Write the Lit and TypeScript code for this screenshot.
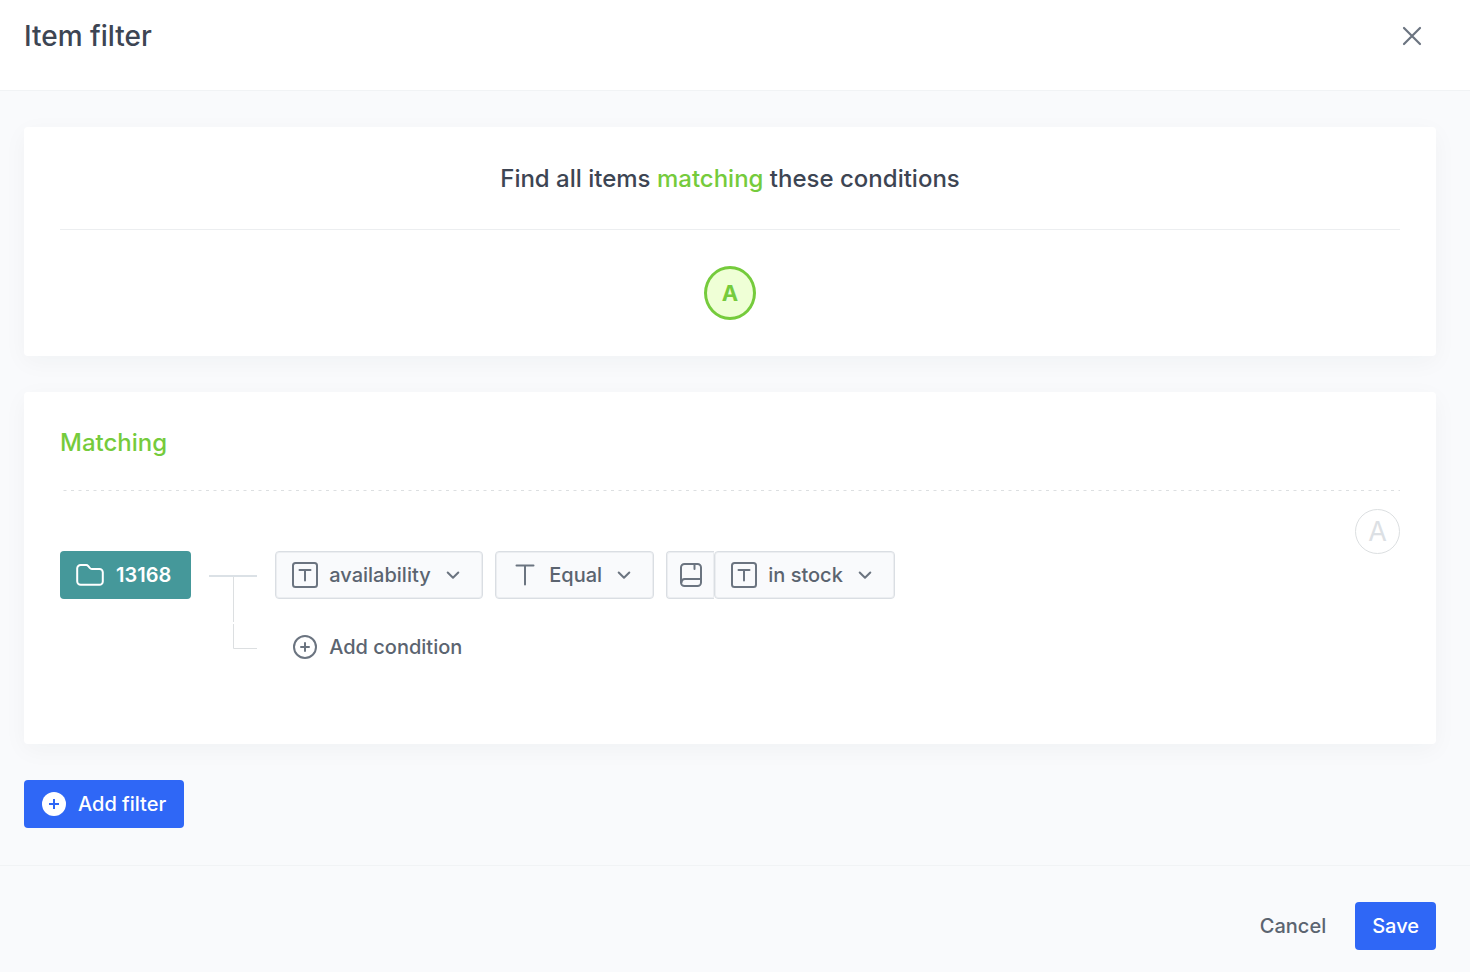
import { LitElement, html, css, svg } from "lit";
import { customElement, property } from "lit/decorators.js";

const typeIcon = svg`
  <rect x="2" y="2" width="24" height="24" rx="2.5" stroke-width="2"/>
  <path d="M8.5 9h11M14 9v10.5" stroke-width="2"/>`;

const equalIcon = svg`<path d="M5.5 4.5h17M14 4.5v19" stroke-width="2"/>`;

@customElement("filter-select")
export class FilterSelect extends LitElement {
  @property() label = "";
  @property() value = "";
  @property() icon = "type";

  static styles = css`
    :host { display: block; }
    .field {
      display: grid;
      grid-template-columns: 54px 1fr 54px;
      align-items: center;
      color: #6b7480;
    }
    select {
      grid-area: 1 / 1 / 2 / 4;
      box-sizing: border-box;
      height: 48px;
      padding: 0 51px 0 53px;
      border: 1px solid #dadee3;
      border-radius: 4px;
      box-shadow: inset 0 0 0 1px #eceef1;
      background: #f9fafc;
      color: #5b6470;
      font: 500 20px/24px Inter, sans-serif;
      appearance: none;
      cursor: pointer;
    }
    svg {
      fill: none;
      stroke: currentColor;
      stroke-linecap: round;
      stroke-linejoin: round;
      pointer-events: none;
      z-index: 1;
    }
    .kind { grid-area: 1 / 1; margin-left: 16px; }
    .chevron { grid-area: 1 / 3; margin-left: 16px; }
  `;

  render() {
    return html`
      <div class="field">
        <select aria-label=${this.label}><option>${this.value}</option></select>
        <svg class="kind" width="28" height="28" viewBox="0 0 28 28" aria-hidden="true">
          ${this.icon === "type" ? typeIcon : equalIcon}
        </svg>
        <svg class="chevron" width="16" height="16" viewBox="0 0 16 16" aria-hidden="true">
          <path d="M2.7 5.5 8 10.8l5.3-5.3" stroke-width="2"/>
        </svg>
      </div>
    `;
  }
}

@customElement("app-root")
export class AppRoot extends LitElement {
  static styles = css`
    :host {
      display: flex;
      flex-direction: column;
      min-height: 100vh;
      box-sizing: border-box;
      background: #f9fafc;
      color: #3d4553;
      font: 500 20px/24px Inter, sans-serif;
    }
    h1, h2 { margin: 0; font-weight: 500; }
    button {
      font: inherit;
      border: 0;
      border-radius: 4px;
      background: none;
      color: #5b6470;
      height: 48px;
      padding: 0 17px;
      cursor: pointer;
    }
    svg { display: block; flex: none; }
    .header {
      display: flex;
      justify-content: space-between;
      padding: 18px 34px 36px 24px;
      background: #fff;
      border-bottom: 1px solid #f1f3f5;
    }
    h1 { font-size: 28px; line-height: 36px; }
    .close {
      display: grid;
      place-items: center;
      width: 48px;
      height: 36px;
      padding: 0;
      color: #6b7480;
    }
    .content {
      display: flex;
      flex-direction: column;
      align-items: flex-start;
      gap: 36px;
      padding: 36px 34px 37px 24px;
    }
    .card {
      align-self: stretch;
      padding: 36px;
      border-radius: 4px;
      background: #fff;
      box-shadow: 0 6px 24px rgba(30, 40, 60, 0.04);
    }
    h2 { font-size: 24px; line-height: 30px; }
    .summary-title {
      padding: 1px 0 35px;
      border-bottom: 1px solid #eceef0;
      text-align: center;
    }
    .green { color: #75cb3c; }
    .badge {
      display: grid;
      place-items: center;
      box-sizing: border-box;
      width: 52px;
      height: 54px;
      margin: 36px auto 0;
      border: 3px solid #75cb3c;
      border-radius: 50%;
      background: #efffd6;
      color: #75cb3c;
      font-size: 22px;
      font-weight: 700;
    }
    .dashes { width: 100%; height: 1px; margin-top: 32px; }
    .group {
      display: flex;
      align-items: flex-start;
      justify-content: space-between;
      padding-bottom: 37px;
    }
    .tree { display: flex; gap: 18px; margin-top: 60px; }
    .folder, .add {
      display: flex;
      align-items: center;
      gap: 12px;
      padding: 0 18px;
    }
    .folder {
      padding: 0 20px 0 16px;
      background: #45989a;
      color: #fff;
      font-weight: 600;
    }
    .conditions { display: flex; flex-direction: column; align-items: flex-start; gap: 24px; }
    .condition { display: flex; gap: 12px; }
    .value { display: flex; }
    .source {
      display: grid;
      place-items: center;
      box-sizing: border-box;
      width: 48px;
      padding: 0;
      border: 1px solid #dadee3;
      border-radius: 4px 0 0 4px;
      border-right: 0;
      box-shadow: inset 0 0 0 1px #eceef1;
      background: #f9fafc;
      color: #6b7480;
    }
    .letter {
      display: grid;
      place-items: center;
      box-sizing: border-box;
      width: 45px;
      height: 45px;
      margin-top: 18px;
      border: 1px solid #dcdfe1;
      border-radius: 50%;
      color: #dce0e4;
      font-size: 27px;
      font-weight: 400;
    }
    .primary { background: #2f67f6; color: #fff; }
    .footer {
      display: flex;
      flex: 1;
      align-items: flex-start;
      justify-content: flex-end;
      gap: 12px;
      padding: 36px 34px 22px 24px;
      border-top: 1px solid #f1f3f5;
    }
  `;

  render() {
    return html`
      <header class="header">
        <h1>Item filter</h1>
        <button class="close" aria-label="Close">
          <svg width="20" height="20" viewBox="0 0 20 20" fill="none" stroke="currentColor" stroke-width="2.2" stroke-linecap="round">
            <path d="m2 2 16 16M18 2 2 18"/>
          </svg>
        </button>
      </header>

      <main class="content">
        <section class="card">
          <h2 class="summary-title">Find all items <span class="green">matching</span> these conditions</h2>
          <div class="badge">A</div>
        </section>

        <section class="card">
          <h2 class="green">Matching</h2>
          <svg class="dashes" aria-hidden="true">
            <line x1="3.5" x2="100%" y1="0.5" y2="0.5" stroke="#dcdfe1" stroke-dasharray="3 4.5"/>
          </svg>
          <div class="group">
            <div class="tree">
              <button class="folder">
                <svg width="28" height="24" viewBox="0 0 28 24" fill="none" stroke="currentColor" stroke-width="2" stroke-linejoin="round">
                  <path d="M1.200 5.500a3.500 3.500 0 0 1 3.500-3.500h5.500c1 0 1.500.4 2.100 1.100l1.500 1.900c.6.8 1.200 1 2.100 1h7.600a3.300 3.300 0 0 1 3.300 3.300v9.200a3.300 3.300 0 0 1-3.300 3.300H4.700a3.500 3.500 0 0 1-3.500-3.500z"/>
                </svg>
                13168
              </button>
              <svg width="48" height="120" viewBox="0 0 48 120" fill="none" stroke="#dcdfe1" aria-hidden="true">
                <path d="M0 25h48" stroke="#dbe1e6" stroke-width="2"/>
                <path d="M24.500 26v45M24.500 73v24.500H48"/>
              </svg>
              <div class="conditions">
                <div class="condition">
                  <filter-select label="Field" value="availability"></filter-select>
                  <filter-select label="Operator" value="Equal" icon="equal"></filter-select>
                  <div class="value">
                    <button class="source" aria-label="Value source">
                      <svg width="24" height="26" viewBox="0 0 24 26" fill="none" stroke="currentColor" stroke-width="2" stroke-linecap="round" stroke-linejoin="round">
                        <rect x="2" y="2" width="20" height="22" rx="3.500"/>
                        <path d="M15.500 2v5M2.500 20.500c0-2.200 1.200-3.500 3.200-3.500H21.500"/>
                      </svg>
                    </button>
                    <filter-select label="Value" value="in stock"></filter-select>
                  </div>
                </div>
                <button class="add">
                  <svg width="24" height="24" viewBox="0 0 24 24" fill="none" stroke="#6b7480" stroke-width="2" stroke-linecap="round">
                    <circle cx="12" cy="12" r="11"/>
                    <path d="M8 12h8M12 8v8"/>
                  </svg>
                  Add condition
                </button>
              </div>
            </div>
            <div class="letter">A</div>
          </div>
        </section>

        <button class="add primary">
          <svg width="24" height="24" viewBox="0 0 24 24">
            <circle cx="12" cy="12" r="12" fill="#fff"/>
            <path d="M7 12h10M12 7v10" stroke="#2f67f6" stroke-width="2"/>
          </svg>
          Add filter
        </button>
      </main>

      <footer class="footer">
        <button>Cancel</button>
        <button class="primary">Save</button>
      </footer>
    `;
  }
}
